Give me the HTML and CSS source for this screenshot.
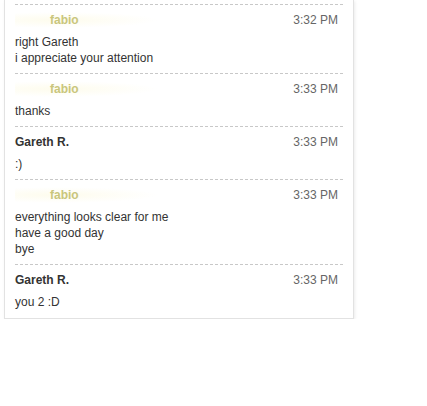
FILE: index.html
```html
<!DOCTYPE html>
<html lang="en">
<head>
    <meta charset="UTF-8">
    <title>Chat log</title>
    <link rel="stylesheet" href="styles.css">
</head>
<body>
    <div class="chat">
        <div class="message">
            <div class="message-head">
                <span class="name name-guest">fabio</span>
                <span class="time">3:32 PM</span>
            </div>
            <div class="message-body">right Gareth<br>i appreciate your attention</div>
        </div>
        <div class="message">
            <div class="message-head">
                <span class="name name-guest">fabio</span>
                <span class="time">3:33 PM</span>
            </div>
            <div class="message-body">thanks</div>
        </div>
        <div class="message">
            <div class="message-head">
                <span class="name">Gareth R.</span>
                <span class="time">3:33 PM</span>
            </div>
            <div class="message-body">:)</div>
        </div>
        <div class="message">
            <div class="message-head">
                <span class="name name-guest">fabio</span>
                <span class="time">3:33 PM</span>
            </div>
            <div class="message-body">everything looks clear for me<br>have a good day<br>bye</div>
        </div>
        <div class="message">
            <div class="message-head">
                <span class="name">Gareth R.</span>
                <span class="time">3:33 PM</span>
            </div>
            <div class="message-body">you 2 :D</div>
        </div>
    </div>
</body>
</html>
```

FILE: styles.css
```css
body {
    margin: 0;
    background: #fff;
    font-family: 'Liberation Sans', Arial, sans-serif;
    font-size: 12px;
    color: #333;
}

.chat {
    width: 328px;
    margin-left: 4px;
    padding: 4px 10px 0 10px;
    border: 1px solid #e2e2e2;
    border-top: none;
    box-shadow: 1px 1px 3px rgba(0, 0, 0, 0.08);
    background: #fff;
}

.message {
    border-top: 1px dashed #c8c8c8;
    padding: 7px 0 7px 0;
}

.message:last-child {
    padding-bottom: 8px;
}

.message-head {
    display: flex;
    justify-content: space-between;
    line-height: 16px;
    margin-bottom: 6px;
}

.name {
    font-weight: bold;
    color: #333;
}

.name-guest {
    padding: 0 80px 0 35px;
    color: #c9c67c;
    background: radial-gradient(ellipse at 30% 50%, rgba(252, 248, 215, 0.45), rgba(255, 255, 255, 0) 70%);
}

.time {
    padding-right: 5px;
    color: #666;
}

.message-body {
    line-height: 16px;
}
```
